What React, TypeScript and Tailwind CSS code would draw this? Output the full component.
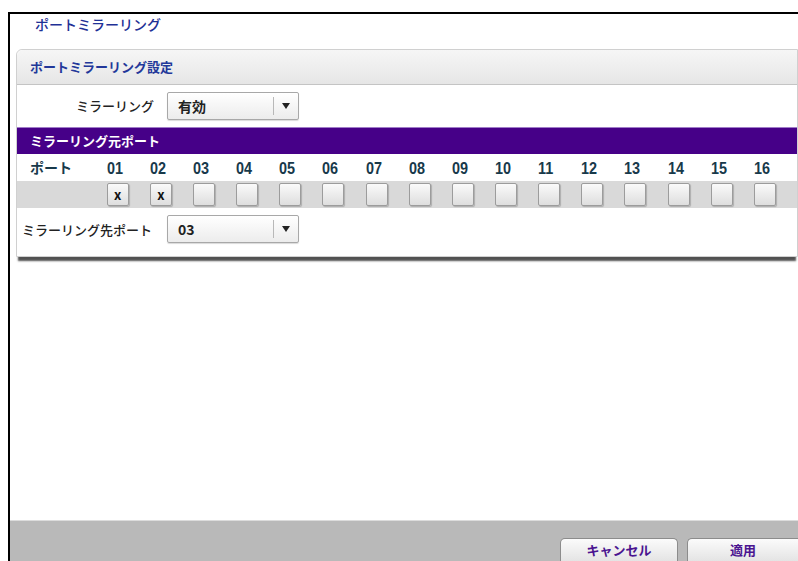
const ports = ['01', '02', '03', '04', '05', '06', '07', '08', '09', '10', '11', '12', '13', '14', '15', '16'];
const checked = ['01', '02'];

function SelectBox({ value }: { value: string }) {
  return (
    <div className="w-[132px] h-[28px] flex items-center border border-[#a8a8a8] rounded-[2px] bg-gradient-to-b from-white to-[#ececec] shadow-[0_1px_1px_rgba(0,0,0,0.15)]">
      <div className="flex-1 pl-[10px] text-[14px] font-bold text-[#222]">{value}</div>
      <div className="w-px h-[18px] bg-[#b8b8b8]" />
      <div className="w-[24px] flex justify-center">
        <svg width="8" height="6" viewBox="0 0 8 6">
          <path d="M0 0 H8 L4 6 Z" fill="#222" />
        </svg>
      </div>
    </div>
  );
}

function Checkbox({ on }: { on: boolean }) {
  return (
    <div className="w-[22px] h-[23px] flex items-center justify-center border border-[#9c9c9c] rounded-[2px] bg-gradient-to-b from-[#fafafa] to-[#dedede] shadow-[1px_1px_1px_rgba(0,0,0,0.2)] text-[13px] font-bold text-[#111] leading-none">
      {on ? 'x' : ''}
    </div>
  );
}

export default function App() {
  return (
    <div className="w-[798px] h-[561px] bg-white overflow-hidden pl-[8px] pt-[12px] font-['Noto_Sans_CJK_JP','Liberation_Sans',sans-serif]">
      <div className="h-[549px] border-l-2 border-t-2 border-black flex flex-col">
        <div className="h-[35px] pl-[25px] text-[14px] leading-[20px] font-medium text-[#1f3196]">ポートミラーリング</div>

        <div className="ml-[6px] border border-[#d0d0d0] rounded-tl-[6px] bg-white shadow-[0_6px_2px_-2px_rgba(50,50,50,0.85)]">
          <div className="h-[35px] flex items-center pl-[13px] bg-gradient-to-b from-[#f6f6f6] to-[#e6e6e6] border-b border-[#c4c4c4] rounded-tl-[6px] text-[13px] font-bold text-[#22389a]">
            ポートミラーリング設定
          </div>

          <div className="h-[42px] flex items-center">
            <div className="w-[137px] text-right text-[13px] font-medium text-[#222]">ミラーリング</div>
            <div className="ml-[13px]">
              <SelectBox value="有効" />
            </div>
          </div>

          <div className="h-[27px] flex items-center pl-[13px] bg-[#460088] border-t border-[#a07cc8] text-[13px] font-bold text-white">
            ミラーリング元ポート
          </div>

          <div className="h-[27px] flex items-center">
            <div className="w-[90px] pl-[13px] text-[14px] font-bold text-[#17394a]">ポート</div>
            {ports.map((p) => (
              <div key={p} className="w-[43.3px]">
                <span className="inline-block origin-left scale-x-[0.9] font-['Liberation_Sans',sans-serif] text-[16px] font-bold text-[#17394a]">
                  {p}
                </span>
              </div>
            ))}
          </div>

          <div className="h-[27px] flex items-center bg-[#d9d9d9]">
            <div className="w-[90px]" />
            {ports.map((p) => (
              <div key={p} className="w-[43.3px]">
                <Checkbox on={checked.includes(p)} />
              </div>
            ))}
          </div>

          <div className="h-[48px] flex items-start pt-[7px]">
            <div className="w-[137px] pl-[5px] pt-[5px] text-[13px] font-medium text-[#222]">ミラーリング先ポート</div>
            <div className="ml-[13px]">
              <SelectBox value="03" />
            </div>
          </div>
        </div>

        <div className="flex-1" />

        <div className="h-[41px] bg-[#b9b9b9] border-t border-[#dcdcdc] flex items-end justify-end gap-[9px]">
          <div className="w-[118px] h-[23px] flex items-center justify-center rounded-t-[5px] border border-b-0 border-[#8c8c8c] bg-gradient-to-b from-[#fbfbfb] to-[#e4e4e4] text-[13px] font-bold text-[#4a1490]">
            キャンセル
          </div>
          <div className="w-[111px] h-[23px] flex items-center justify-center rounded-tl-[5px] border border-r-0 border-b-0 border-[#8c8c8c] bg-gradient-to-b from-[#fbfbfb] to-[#e4e4e4] text-[13px] font-bold text-[#4a1490]">
            適用
          </div>
        </div>
      </div>
    </div>
  );
}
